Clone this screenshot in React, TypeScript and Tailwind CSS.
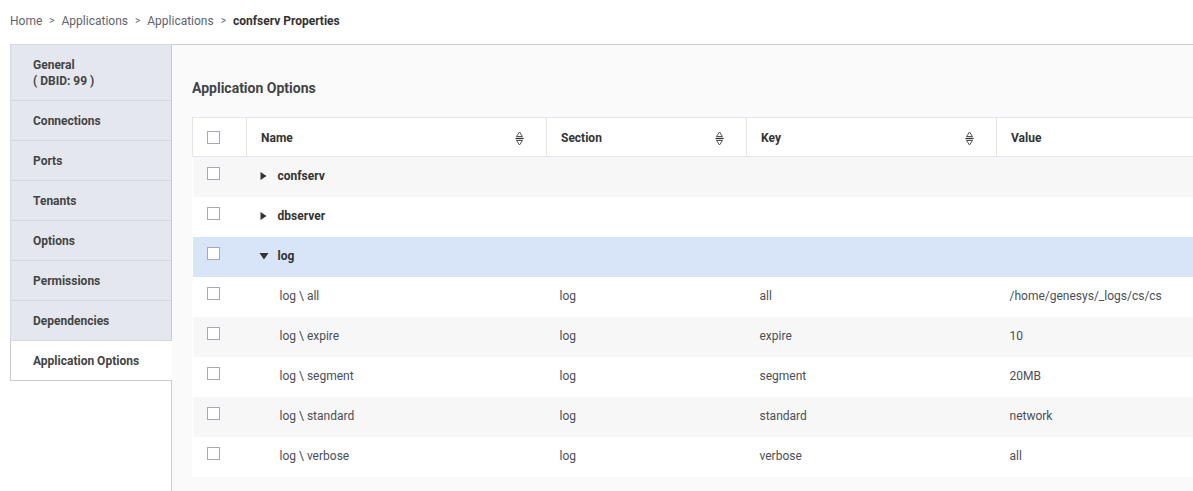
import React from "react";

const tabs = [
  { label: "Connections" },
  { label: "Ports" },
  { label: "Tenants" },
  { label: "Options" },
  { label: "Permissions" },
  { label: "Dependencies" },
];

const rows = [
  { name: "confserv", parent: true, open: false, bg: "bg-[#f7f7f7]" },
  { name: "dbserver", parent: true, open: false, bg: "bg-white" },
  { name: "log", parent: true, open: true, bg: "bg-[#d8e4f8]" },
  { name: "log \\ all", section: "log", key: "all", value: "/home/genesys/_logs/cs/cs", bg: "bg-white" },
  { name: "log \\ expire", section: "log", key: "expire", value: "10", bg: "bg-[#f7f7f7]" },
  { name: "log \\ segment", section: "log", key: "segment", value: "20MB", bg: "bg-white" },
  { name: "log \\ standard", section: "log", key: "standard", value: "network", bg: "bg-[#f7f7f7]" },
  { name: "log \\ verbose", section: "log", key: "verbose", value: "all", bg: "bg-white" },
];

const Checkbox = () => (
  <span className="block w-[13px] h-[13px] border border-[#a3abb8] bg-white" />
);

const SortIcon = () => (
  <svg width="9" height="15" viewBox="0 0 9 15" className="shrink-0">
    <path d="M4.5 1 L7.5 5.5 L1.5 5.5 Z" fill="none" stroke="#555" strokeWidth="1" />
    <line x1="0.5" y1="7.5" x2="8.5" y2="7.5" stroke="#333" strokeWidth="1.4" />
    <path d="M1.5 9.5 L7.5 9.5 L4.5 14 Z" fill="none" stroke="#555" strokeWidth="1" />
  </svg>
);

const Caret = ({ open }: { open: boolean }) =>
  open ? (
    <svg width="10" height="8" viewBox="0 0 10 8" className="shrink-0">
      <path d="M0.5 1 L9.5 1 L5 7.5 Z" fill="#333" />
    </svg>
  ) : (
    <svg width="10" height="10" viewBox="0 0 10 10" className="shrink-0">
      <path d="M1.5 1 L7.5 5 L1.5 9 Z" fill="#333" />
    </svg>
  );

const HeaderCell = ({ label, width, sort }: any) => (
  <th className={`${width} h-[39px] border-r border-[#e2e6ec] px-[14px] pt-[2px] text-left font-bold text-[12px] text-[#333]`}>
    <div className="flex items-center justify-between pr-[8px]">
      <span>{label}</span>
      {sort && <SortIcon />}
    </div>
  </th>
);

const App = () => {
  return (
    <div className="w-full h-[491px] overflow-hidden bg-white text-[#444] font-['Roboto',sans-serif]">
      {/* Breadcrumb */}
      <div className="h-[44px] px-[10px] pt-[13px] flex items-start gap-[7px] text-[12px] leading-[16px] text-[#5b6470]">
        <span>Home</span>
        <span className="text-[10px]">&gt;</span>
        <span>Applications</span>
        <span className="text-[10px]">&gt;</span>
        <span>Applications</span>
        <span className="text-[10px]">&gt;</span>
        <span className="font-bold text-[#333]">confserv Properties</span>
      </div>

      <div className="flex h-[447px]">
        {/* Sidebar */}
        <div className="ml-[10px] w-[162px] shrink-0 border-r border-[#cccccc] border-t border-t-[#d5d9df]">
          <div className="h-[56px] pl-[22px] pt-[12px] bg-[#e4e8ee] border-l border-b border-[#d5d9df] text-[12px] leading-[16px] font-bold text-[#444]">
            <div>General</div>
            <div>( DBID: 99 )</div>
          </div>
          {tabs.map((t) => (
            <div
              key={t.label}
              className="h-[40px] pl-[22px] flex items-center bg-[#e4e8ee] border-l border-b border-[#d5d9df] text-[12px] font-bold text-[#444]"
            >
              {t.label}
            </div>
          ))}
          <div className="h-[40px] pl-[22px] flex items-center bg-white border-l border-b border-[#cccccc] -mr-px text-[12px] font-bold text-[#444]">
            Application Options
          </div>
        </div>

        {/* Main */}
        <div className="flex-1 min-w-0 overflow-hidden bg-[#fafafa] border-t border-[#cccccc] pt-[33px] pl-[20px]">
          <h2 className="h-[20px] leading-[20px] mb-[19px] text-[14px] font-bold text-[#444]">
            Application Options
          </h2>
          <table className="w-[1060px] border-collapse table-fixed bg-white text-[12px]">
            <thead>
              <tr className="border-t border-b border-[#e2e6ec]">
                <th className="w-[54px] h-[39px] border-l border-r border-[#e2e6ec] pl-[14px]">
                  <Checkbox />
                </th>
                <HeaderCell label="Name" width="w-[300px]" sort />
                <HeaderCell label="Section" width="w-[200px]" sort />
                <HeaderCell label="Key" width="w-[250px]" sort />
                <HeaderCell label="Value" width="w-[256px]" />
              </tr>
            </thead>
            <tbody>
              {rows.map((r: any) => (
                <tr key={r.name} className={`${r.bg} h-[40px] text-[#4a4f57] align-top leading-[16px]`}>
                  <td className="pl-[14px] pt-[10px]">
                    <Checkbox />
                  </td>
                  {r.parent ? (
                    <td className="pl-[12px] pt-[11px] font-bold text-[#333]">
                      <div className="flex items-center gap-[9px] h-[16px]">
                        <Caret open={r.open} />
                        <span>{r.name}</span>
                      </div>
                    </td>
                  ) : (
                    <td className="pl-[33px] pt-[11px]">{r.name}</td>
                  )}
                  <td className="pl-[13px] pt-[11px]">{r.section}</td>
                  <td className="pl-[13px] pt-[11px]">{r.key}</td>
                  <td className="pl-[13px] pt-[11px]">{r.value}</td>
                </tr>
              ))}
            </tbody>
          </table>
        </div>
      </div>
    </div>
  );
};

export default App;
